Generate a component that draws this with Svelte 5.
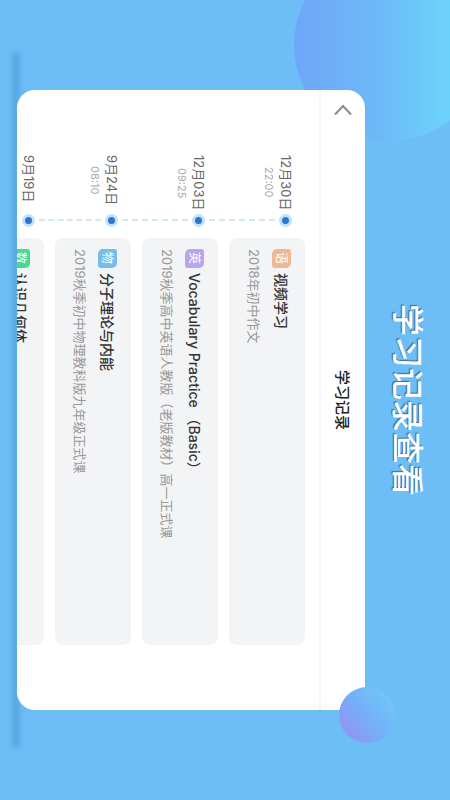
<script lang="ts">
  const records = [
    { date: '12月30日', time: '22:00', subject: '语', color: '#eeb893', title: '视频学习', course: '2018年初中作文' },
    { date: '12月03日', time: '09:25', subject: '英', color: '#b9a4ee', title: 'Vocabulary Practice （Basic）', course: '2019秋季高中英语人教版（老版教材）高一正式课' },
    { date: '9月24日', time: '08:10', subject: '物', color: '#74bdec', title: '分子理论与内能', course: '2019秋季初中物理教科版九年级正式课' },
    { date: '9月19日', time: '', subject: '数', color: '#45d992', title: '认识几何体', course: '' }
  ];
</script>

<main class="page">
  <span class="orb orb-large"></span>
  <h1>学习记录查看</h1>

  <div class="stage">
    <span class="shadow"></span>
    <section class="panel">
      <header>
        <button type="button" aria-label="返回">
          <svg viewBox="0 0 20 12" width="20" height="12"><path d="M2 10.5 10 2l8 8.5" /></svg>
        </button>
        <h2>学习记录</h2>
      </header>

      <ul class="records">
        {#each records as record}
          <li class:untimed={!record.time}>
            <div class="when">
              <span class="date">{record.date}</span>
              {#if record.time}
                <span class="time">{record.time}</span>
              {/if}
            </div>
            <div class="rail">
              <i class="dot"></i>
              <i class="line"></i>
            </div>
            <article class="card">
              <h3><span class="badge" style="background: {record.color}">{record.subject}</span>{record.title}</h3>
              <p>{record.course}</p>
            </article>
          </li>
        {/each}
      </ul>
    </section>
    <span class="orb orb-small"></span>
  </div>
</main>

<style>
  :global(body) { margin: 0; overflow: hidden; }

  /* landscape screen, read from right to left as blocks */
  .page {
    writing-mode: vertical-rl;
    text-orientation: sideways;
    position: relative;
    display: flex;
    flex-direction: column;
    box-sizing: border-box;
    width: 100vw;
    height: 100vh;
    overflow: hidden;
    background: #6dbef6;
    color: #333;
    font-family: Inter, "Noto Sans CJK SC", sans-serif;
  }
  h1, h2, h3, p, ul { margin: 0; padding: 0; font-weight: 400; }

  h1 {
    position: relative;
    flex: none;
    block-size: 85px;
    line-height: 86px;
    font-size: 32px;
    font-weight: 500;
    text-align: center;
    color: #fff;
    text-shadow: -1px 1px 1px rgba(40, 80, 110, 0.8);
  }

  .stage { position: relative; flex: 1; min-block-size: 0; padding-inline: 90px; padding-block-end: 17px; display: flex; flex-direction: column; }
  .panel {
    position: relative;
    flex: 1;
    min-block-size: 0;
    display: flex;
    flex-direction: column;
    overflow: hidden;
    border-radius: 18px;
    background: #fff;
  }
  .shadow {
    position: absolute;
    left: 13px;
    top: 52px;
    bottom: 52px;
    width: 6px;
    border-radius: 3px;
    background: #4f9fdc;
    filter: blur(3px);
  }

  header {
    flex: none;
    display: grid;
    grid-template-columns: 40px 1fr 40px;
    align-items: center;
    block-size: 44px;
    border-block-end: 2px solid #f7f7f8;
  }
  header button { display: grid; place-items: center; inline-size: 40px; block-size: 40px; padding: 0; border: 0; background: none; }
  header svg { fill: none; stroke: #8c8c8c; stroke-width: 2; }
  h2 { font-size: 15px; font-weight: 500; text-align: center; color: #222; }

  .records { flex: 1; min-block-size: 0; overflow: hidden; list-style: none; padding-block-start: 14px; padding-inline: 65px; }
  li { display: grid; grid-template-columns: 55px 20px 1fr; block-size: 76px; margin-block-end: 11px; white-space: nowrap; }
  .when { justify-self: start; padding-block-start: 9px; text-align: center; }
  .date { display: block; font-size: 13px; line-height: 20px; color: #666; }
  .time { display: block; font-size: 11px; line-height: 14px; color: #aaa; }
  .rail { display: flex; flex-direction: column; align-items: center; padding-block-start: 13px; }
  .untimed .when { padding-block-start: 5px; }
  .untimed .rail { padding-block-start: 9px; }
  .dot { flex: none; box-sizing: border-box; inline-size: 13px; block-size: 13px; border: 3px solid #bfe3fc; border-radius: 50%; background: #2c78c6; }
  .line { flex: 1; margin-block: 4px -20px; border-inline-start: 2px dashed #d3e7f1; }
  .untimed .line { margin-block-end: 0; border: 0; }
  li:nth-last-child(2) .line { margin-block-end: -16px; }

  .card { margin-inline: 8px 0; padding: 11px; padding-block: 14px 0; border-radius: 8px; background: #f3f4f6; }
  h3 { display: flex; align-items: center; gap: 5px; block-size: 20px; font-size: 14px; line-height: 20px; font-weight: 500; color: #333; }
  .badge { display: grid; place-items: center; inline-size: 19px; block-size: 19px; border-radius: 5px 3px; font-size: 12px; line-height: 19px; font-weight: 400; color: #fff; }
  .card p { margin-block-start: 7px; font-size: 13px; line-height: 20px; color: #999; }

  .orb { position: absolute; border-radius: 50%; }
  .orb-large { top: -51px; right: -36px; width: 192px; height: 192px; background: linear-gradient(90deg, #6fa6f8, #6cbaf7 45%, #6ddcfc 95%); }
  .orb-small { right: -30px; bottom: 57px; width: 56px; height: 56px; background: linear-gradient(50deg, #9592f2 10%, #74b0f8 50%, #6fc8f8 90%); }
</style>
